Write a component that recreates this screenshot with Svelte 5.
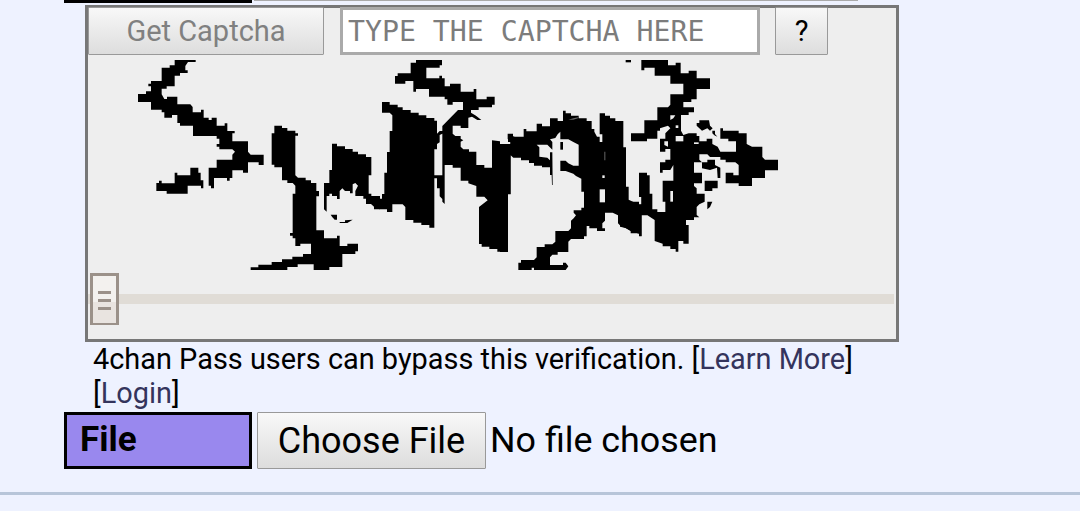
<script>
  // Ink shapes of the challenge picture, grouped by tile; each tile is stored at three units per pixel.
  const tiles = [
    { x: 130, y: 55, ink: [
      '134,15 197,15 197,21 174,21 166,33 166,46 173,46 173,54 150,54 150,62 134,62 134,94 110,94 110,101 95,101 95,118 103,132 111,132 111,125 142,125 142,148 181,148 188,156 188,172 213,172 213,164 221,164 221,188 236,188 236,195 245,195 245,188 260,188 260,212 284,212 284,205 292,205 292,228 314,228 314,235 307,235 307,259 354,259 354,290 362,299 401,299 401,330 386,330 386,322 354,322 354,353 339,353 339,346 307,346 307,369 299,369 299,377 291,377 291,369 252,369 252,400 243,400 243,392 236,392 236,338 260,338 260,314 307,314 307,299 315,290 307,283 268,283 268,275 260,275 260,267 268,267 268,251 260,251 260,243 189,243 189,212 150,212 150,204 142,204 142,180 126,180 126,188 103,188 103,172 95,172 95,164 63,164 63,141 24,141 24,117 48,117 48,109 63,109 63,94 55,94 55,86 63,86 63,78 95,78 95,38 119,38 119,31 134,31',
      '181,338 205,338 205,353 212,353 212,376 220,376 220,400 213,400 213,392 173,392 173,416 110,416 110,408 79,408 79,384 87,384 87,377 95,377 95,385 134,385 134,353 142,353 142,361 181,361'
    ], gaps: [] },
    { x: 240, y: 115, ink: [
      '103,32 126,32 126,39 142,39 142,47 166,47 166,55 174,55 174,62 166,62 166,181 174,188 197,188 197,196 213,196 213,204 229,204 229,228 237,228 237,244 229,244 229,346 252,346 252,370 291,370 291,362 299,362 299,393 322,393 322,386 354,386 354,409 346,409 346,417 307,417 307,456 268,456 268,465 221,465 221,448 173,448 173,456 142,456 142,465 32,465 32,457 55,457 55,449 95,449 95,441 126,441 126,433 157,433 157,425 189,425 189,417 213,417 213,386 181,386 181,393 166,393 166,370 158,370 158,362 150,362 150,354 158,354 158,236 166,236 166,212 158,204 142,204 142,196 126,196 126,157 103,157 103,149 95,149 95,55 103,55',
      '276,86 291,86 291,94 315,94 315,102 338,102 338,110 354,110 354,118 378,118 378,126 394,126 394,181 386,181 386,236 394,236 394,243 420,243 420,283 402,283 402,275 393,267 378,267 378,251 370,251 370,243 346,243 346,228 354,212 346,204 338,208 338,235 330,235 330,228 315,228 307,220 299,228 299,252 291,252 291,243 276,243 276,236 268,236 268,243 260,243 260,290 252,283 252,204 268,204 268,165 276,165',
      '272,299 291,299 291,314 284,314 276,305', '299,321 315,321 315,316 338,314 322,324 299,324'
    ], gaps: [] },
    { x: 370, y: 55, ink: [
      '36,141 59,141 59,149 83,149 83,157 98,157 98,165 122,165 122,173 146,173 146,181 169,181 169,189 193,189 193,197 201,197 201,236 209,228 217,228 217,213 264,165 279,165 279,141 248,141 248,149 232,149 232,133 224,133 224,125 177,125 177,102 138,102 138,110 130,110 130,78 106,78 106,86 75,86 75,63 83,63 83,55 122,55 122,23 138,23 138,15 216,15 216,31 209,31 209,38 169,38 169,70 208,70 208,62 216,62 216,70 224,70 224,94 240,94 240,86 272,86 272,110 311,110 311,102 319,102 319,133 350,133 350,125 374,125 374,149 366,149 366,157 326,157 326,165 303,165 303,173 318,182 334,195 322,195 306,185 295,188 295,219 272,219 272,212 248,212 248,236 256,243 272,243 272,251 280,256 272,260 272,275 280,283 297,283 297,290 319,290 319,330 343,330 343,338 366,338 366,256 390,259 390,267 421,267 421,259 413,252 413,236 429,236 429,244 450,252 450,306 429,306 429,298 421,298 421,417 413,417 413,590 382,590 382,582 358,582 358,575 335,575 335,567 327,567 327,456 353,436 343,425 319,425 319,393 295,385 295,377 272,377 272,338 248,338 248,330 224,330 224,447 217,440 217,432 209,424 209,400 201,400 201,370 193,370 193,518 178,518 178,510 154,510 154,503 130,503 130,495 106,495 106,456 98,448 67,448 67,471 51,471 51,463 28,463 28,455 12,455 12,447 0,447 0,423 20,423 28,431 36,431 36,417 43,417 43,353 51,353 51,291 59,291 59,228 67,228 67,181 59,173 36,173'
    ], gaps: ['193,283 201,283 201,267 209,262 209,240 217,236 217,361 193,361'] },
    { x: 500, y: 95, ink: [
      '0,149 32,149 32,141 24,141 24,117 39,117 39,125 71,125 71,102 79,102 79,109 110,109 110,86 126,86 126,94 150,94 150,70 173,70 173,78 189,78 189,47 197,47 197,55 213,55 213,62 236,62 236,70 260,70 260,78 275,78 275,102 283,102 283,110 291,125 299,125 299,141 307,141 307,118 299,118 299,55 315,55 315,62 330,62 330,70 346,70 346,78 370,78 370,157 378,157 378,275 386,275 386,314 402,322 417,322 417,329 425,329 425,306 417,306 417,236 441,236 441,361 425,361 425,424 417,424 417,416 393,409 378,400 362,393 354,385 354,361 338,353 315,353 315,377 307,385 307,400 315,400 315,408 291,408 291,400 268,400 268,393 260,393 260,424 252,424 252,432 213,432 205,440 205,471 173,471 173,479 157,479 150,487 150,510 189,510 189,503 197,503 205,514 197,525 102,525 102,518 95,518 95,525 55,525 55,503 63,503 63,495 102,495 110,487 110,456 134,456 134,448 157,448 166,440 166,408 205,408 213,400 213,377 221,370 228,361 221,353 221,346 244,346 244,338 252,338 252,290 244,290 244,251 228,243 220,236 197,228 181,228 181,197 197,197 205,205 220,212 236,212 236,149 220,141 205,133 181,133 181,110 173,118 166,129 150,133 157,141 157,164 142,149 118,149 110,149 118,157 118,185 142,188 150,196 150,172 157,172 158,270 156,270 155,240 150,240 150,217 126,217 126,212 102,212 102,204 87,204 87,196 63,196 63,188 40,188 32,181 32,298 24,298 24,471 0,471',
      '181,141 189,141 189,164 181,164'
    ], gaps: ['299,283 315,283 315,322 299,322', '307,241 314,241 314,249 307,249'], faint: ['313,170 316,170 316,196 313,196', '205,74 220,70 234,67 234,70 220,74'] },
    { x: 620, y: 55, ink: [
      '64,15 144,15 144,31 167,31 167,23 182,23 182,55 206,55 206,47 230,47 230,70 270,70 270,102 230,102 230,133 214,133 214,141 190,141 190,157 222,157 222,172 206,172 206,180 183,180 183,227 190,240 206,235 230,235 230,243 238,243 238,259 260,259 260,251 277,251 277,267 293,275 301,290 348,290 348,259 325,259 325,251 301,251 301,220 309,220 309,227 356,227 356,235 380,235 380,267 396,275 427,275 427,306 435,314 474,314 474,346 435,346 435,369 396,369 396,393 356,393 356,385 317,385 317,353 340,353 340,361 356,361 356,330 346,322 317,322 317,314 301,314 301,306 270,306 262,298 238,298 238,314 246,322 222,322 222,353 246,353 246,385 222,385 222,393 230,400 230,416 254,416 254,440 238,448 230,456 230,480 238,487 222,487 222,495 198,495 198,510 206,510 206,566 190,566 190,558 175,558 175,590 167,590 167,582 151,582 151,574 128,574 128,566 104,558 104,495 81,480 64,480 64,543 57,543 57,535 32,535 32,527 17,519 0,515 0,432 33,440 57,440 57,448 64,448 64,424 57,424 57,353 81,353 81,361 89,361 89,416 97,416 97,463 112,463 112,471 136,471 136,440 128,440 128,377 160,377 160,330 151,345 128,345 128,353 120,353 120,322 136,322 136,314 151,314 151,282 136,282 136,290 120,290 120,251 136,251 136,235 151,220 144,212 120,220 120,227 112,227 112,251 81,251 81,259 33,259 33,235 73,235 73,196 112,196 112,157 144,157 151,149 151,118 190,118 190,86 151,86 151,62 104,62 104,38 73,38 73,46 64,46',
      '17,15 33,15 33,22 17,22',
      '230,204 238,204 238,196 267,196 270,212 278,220 270,227 262,220 246,227 238,220 230,212',
      '277,227 285,227 285,237 292,245 283,241 277,235',
      '246,322 262,322 262,314 285,314 285,330 301,338 301,369 293,369 291,338 270,345 246,340',
      '254,377 293,377 293,400 277,400 277,408 254,408',
      '262,440 277,440 270,456 262,463'
    ], gaps: ['151,408 159,408 159,440 151,440', '167,243 190,243 190,259 167,259', '151,181 166,181 160,190 151,195', '167,211 175,211 175,219 167,219', '133,259 144,259 144,275 133,270', '222,262 236,262 236,267 222,267'] }
  ];
</script>

<main>
  <div class="previous"><span class="label-end"></span><span class="field-end"></span></div>

  <section class="captcha">
    <div class="controls">
      <button class="get" disabled>Get Captcha</button>
      <input aria-label="Captcha" placeholder="TYPE THE CAPTCHA HERE" />
      <button class="help">?</button>
    </div>
    <svg class="challenge" viewBox="88 60 808 210" aria-hidden="true">
      {#each tiles as tile}
        <g transform="translate({tile.x} {tile.y}) scale(0.333333)">
          {#each tile.ink as points}<polygon {points} />{/each}
          {#each tile.gaps as points}<polygon class="gap" {points} />{/each}
          {#each tile.faint ?? [] as points}<polygon class="faint" {points} />{/each}
        </g>
      {/each}
    </svg>
    <div class="slider">
      <div class="thumb"><i></i><i></i><i></i></div>
      <div class="track"></div>
    </div>
  </section>

  <p class="note"><span class="line">4chan Pass users can bypass this verification. [<a href="#learn">Learn More</a>]</span><span class="line">[<a href="#login">Login</a>]</span></p>

  <div class="file">
    <div class="label">File</div>
    <button class="choose">Choose File</button>
    <span class="chosen">No file chosen</span>
  </div>
  <div class="rule"></div>
</main>

<style>
  :global(body) { margin: 0; background: #eef2ff; overflow: hidden; }
  * { box-sizing: border-box; }
  main { height: 511px; font-family: Roboto, sans-serif; color: #000; }
  .previous { display: flex; gap: 2px; height: 5px; padding-left: 64px; }
  .label-end { width: 188px; height: 3px; background: #000; }
  .field-end { width: 604px; height: 1px; background: #aaa; }
  .captcha { width: 814px; height: 337px; margin-left: 85px; border: 3px solid #777; background: #eee; }
  .controls { display: flex; height: 48px; margin-top: -1px; }
  button {
    padding: 0; border: 1px solid #999; border-radius: 1px; color: #000;
    background: linear-gradient(#f8f8f8, #ddd); font-family: inherit; white-space: nowrap;
  }
  .get { width: 236px; font-size: 29px; color: #808080; }
  input {
    width: 420px; margin: 0 15px 0 16px; padding: 0 0 0 5px; border: 3px solid #aaa;
    border-radius: 0; outline: 0; background: #fff; font: 28.2px "DejaVu Sans Mono", monospace;
  }
  input::placeholder { color: #7c7c7c; opacity: 1; }
  .help { width: 53px; font-size: 29px; }
  .challenge { display: block; width: 808px; height: 210px; margin-top: 5px; }
  .gap { fill: #eee; }
  .faint { fill: #666; }
  .slider { display: flex; align-items: center; height: 52px; margin: 3px 2px 0 0; }
  .slider::before { content: ""; width: 2px; height: 10px; background: #e0dcd6; }
  .thumb {
    display: flex; flex-direction: column; align-items: center; gap: 5px;
    width: 29px; height: 52px; padding-top: 15px; flex: none;
    border: 3px solid #9b9189; border-bottom-width: 2px;
    background: linear-gradient(#f3f1ee 26px, #e9e4e0 26px);
  }
  .thumb i { width: 13px; height: 3px; background: #9b9189; }
  .track { flex: 1; height: 10px; background: #e0dcd6; }
  .note { margin: 0 0 0 93px; height: 70px; font-size: 28.9px; line-height: 34px; white-space: nowrap; }
  .line { display: block; }
  a { color: #34345c; text-decoration: none; }
  .file { display: flex; height: 57px; padding-left: 64px; }
  .label {
    width: 188px; padding-left: 13px; border: 3px solid #000; background: #98e;
    font-size: 35px; font-weight: 700; line-height: 50px;
  }
  .choose { width: 229px; margin: 0 4px 0 5px; font-size: 36px; }
  .chosen { font-size: 35.85px; line-height: 56px; }
  .rule { height: 3px; margin-top: 23px; background: #b7c5d9; }
</style>
